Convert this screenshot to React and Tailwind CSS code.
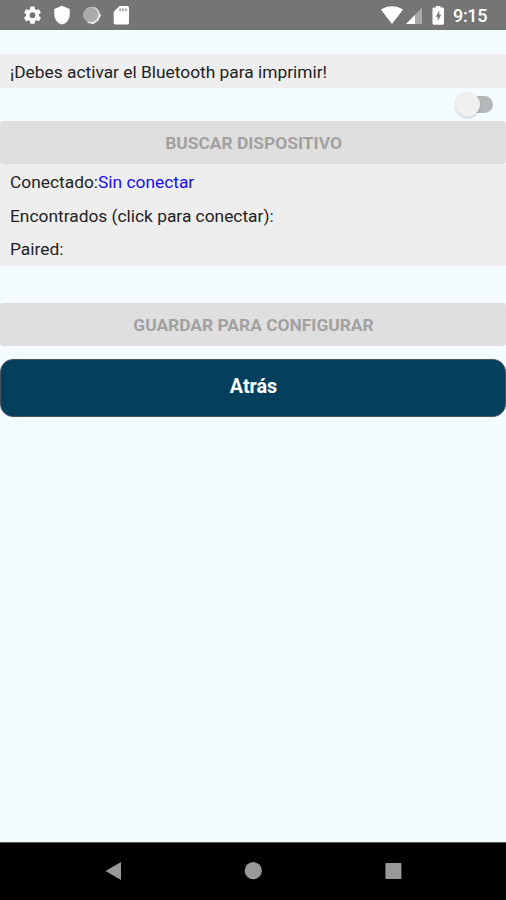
function StatusBar() {
  return (
    <header className="h-[30px] shrink-0 bg-[#757575] text-white">
      <svg width="506" height="30" viewBox="0 0 506 30" fill="#fff" className="block">
        <path
          transform="translate(21.7 4.4) scale(.9)"
          d="M19.14 12.94c.04-.3.06-.61.06-.94s-.02-.64-.07-.94l2.03-1.58a.49.49 0 0 0 .12-.61l-1.92-3.32a.49.49 0 0 0-.59-.22l-2.39.96a7 7 0 0 0-1.62-.94l-.36-2.54a.48.48 0 0 0-.48-.41h-3.84a.47.47 0 0 0-.47.41l-.36 2.54c-.59.24-1.13.57-1.62.94l-2.39-.96a.48.48 0 0 0-.59.22L2.74 8.87a.47.47 0 0 0 .12.61l2.03 1.58c-.05.3-.09.63-.09.94s.02.64.07.94l-2.03 1.58a.49.49 0 0 0-.12.61l1.92 3.32c.12.22.37.29.59.22l2.39-.96c.5.38 1.03.7 1.62.94l.36 2.54c.05.24.24.41.48.41h3.84c.24 0 .44-.17.47-.41l.36-2.54a7 7 0 0 0 1.62-.94l2.39.96c.22.08.47 0 .59-.22l1.92-3.32a.47.47 0 0 0-.12-.61zM12 15.2a3.2 3.2 0 1 1 0-6.4 3.2 3.2 0 0 1 0 6.4z"
        />
        <path d="M62 5.800 54.300 9v5.400c0 4.800 3.200 9 7.700 10.200 4.500-1.200 7.700-5.400 7.700-10.200V9z" />
        <path d="M91.500 6.800c3 0 5.700 1.600 7.200 4l2.200 4.700-2.600 5-4.900 3.700-6-1.500z" fill="#f2f2f2" />
        <circle cx="91" cy="14.700" r="7.300" fill="#aaa" stroke="#bbb" strokeWidth="1" />
        <path
          fillRule="evenodd"
          d="M119.500 6h7.700c1 0 1.800.8 1.800 1.800v14.900c0 1-.8 1.800-1.800 1.800h-11.700c-1 0-1.800-.8-1.800-1.800V11.800z"
        />
        <path d="M119.300 8.500h1.700v2.500h-1.700zm2.900 0h1.700v2.500h-1.700zm2.900 0h1.700v2.500h-1.700z" fill="#999" />
        <path d="M380.900 9.600C387.500 5 396.500 5 403.100 9.600L392 24z" />
        <path d="M422 7.800V24H406z" fill="#a9a9a9" />
        <path d="M415 14.900V24H406z" />
        <path
          fillRule="evenodd"
          d="M436 7.600V6h4.500v1.600h2.300c.7 0 1.200.5 1.200 1.200v14.700c0 .7-.5 1.200-1.200 1.200h-9.100c-.7 0-1.200-.5-1.200-1.200V8.800c0-.7.5-1.200 1.200-1.200zm3.300 3-3.600 6.200h2v4.500l3.500-6.600h-1.900z"
        />
        <text x="453" y="22" textLength="34.500" fontSize="18" fontWeight="500" fontFamily="Roboto, sans-serif">
          9:15
        </text>
      </svg>
    </header>
  );
}

function DisabledButton({ children }) {
  return (
    <button
      disabled
      className="flex h-[43px] w-full shrink-0 items-center justify-center rounded-[3px] bg-[#dfdfdf] pt-[2px] pl-px text-[17.4px] font-bold text-[#a1a1a1]"
    >
      {children}
    </button>
  );
}

function NavigationBar() {
  return (
    <nav className="h-[58px] shrink-0 border-t border-[#555] bg-black">
      <svg width="506" height="57" viewBox="0 843 506 57" fill="#999" className="block">
        <path d="M105.500 871 121 862v18z" />
        <circle cx="253.300" cy="870.700" r="8.600" />
        <rect x="385.400" y="863" width="16" height="16" rx=".8" />
      </svg>
    </nav>
  );
}

export default function App() {
  return (
    <div className="flex h-[900px] w-[506px] flex-col overflow-hidden bg-[#f5fcff] font-['Roboto',sans-serif] text-[17.35px] text-[#222]">
      <StatusBar />
      <main className="flex flex-1 flex-col pt-6">
        <p className="flex h-[34px] items-center bg-[#eee] pl-[10px] pt-[2px]">
          ¡Debes activar el Bluetooth para imprimir!
        </p>
        <div className="flex h-[33px] items-center justify-end pr-[13px]">
          <div className="flex h-[17px] w-[38px] items-center justify-start rounded-full bg-linear-to-r from-transparent from-30% to-[#b5b8b9] to-30%">
            <span className="size-[25px] shrink-0 rounded-full bg-[#f0f0f0] shadow-[0_1px_2px_rgba(0,0,0,0.22)]" />
          </div>
        </div>
        <DisabledButton>BUSCAR DISPOSITIVO</DisabledButton>
        <section className="h-[102px] bg-[#eee] pl-[10px] pt-[2px] leading-[33.6px]">
          <p>
            Conectado:<span className="text-[#1a10ef]">Sin conectar</span>
          </p>
          <p>Encontrados (click para conectar):</p>
          <p>Paired:</p>
        </section>
        <div className="mt-[37px]">
          <DisabledButton>GUARDAR PARA CONFIGURAR</DisabledButton>
        </div>
        <button className="mt-[13px] flex h-[58px] w-full items-start justify-center rounded-[13px] border border-[#455565] bg-[#043f5c] pt-[12px] pl-px text-[19.8px] font-bold text-white">
          Atrás
        </button>
      </main>
      <NavigationBar />
    </div>
  );
}
